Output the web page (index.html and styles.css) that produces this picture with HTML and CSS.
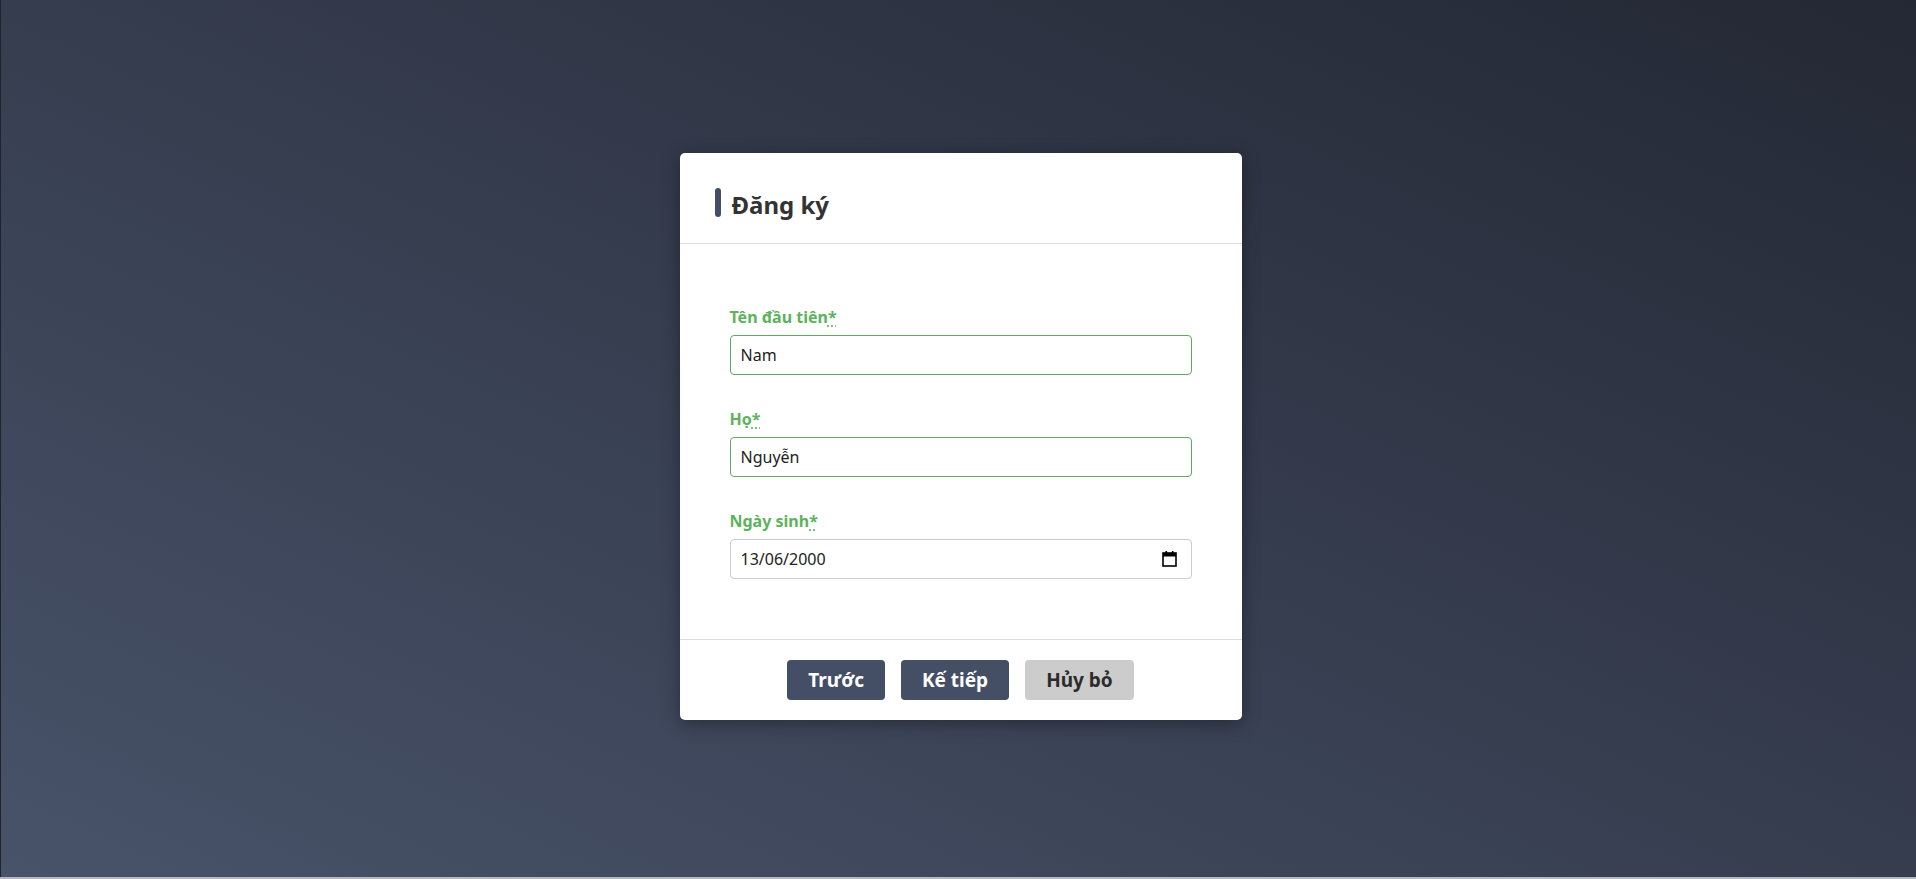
FILE: index.html
```html
<!DOCTYPE html>
<html lang="vi">
<head>
    <meta charset="utf-8">
    <title>Đăng ký</title>
    <link rel="stylesheet" href="styles.css">
</head>
<body>
    <div class="page">
        <div class="card">
            <div class="card-header">
                <span class="accent"></span>
                <h1>Đăng ký</h1>
            </div>

            <form class="card-body">
                <div class="field">
                    <label for="first-name" class="valid">Tên đầu tiên<abbr title="bắt buộc">*</abbr></label>
                    <input id="first-name" class="input input-valid" type="text" value="Nam">
                </div>
                <div class="field">
                    <label for="last-name" class="valid">Họ<abbr title="bắt buộc">*</abbr></label>
                    <input id="last-name" class="input input-valid" type="text" value="Nguyễn">
                </div>
                <div class="field">
                    <label for="birthday" class="valid">Ngày sinh<abbr title="bắt buộc">*</abbr></label>
                    <div class="date-wrap">
                        <input id="birthday" class="input" type="text" value="13/06/2000">
                        <svg class="date-icon" width="15" height="16" viewBox="0 0 15 16">
                            <rect x="1" y="2" width="13" height="13" fill="none" stroke="#000" stroke-width="1.6"/>
                            <rect x="1" y="2" width="13" height="3.5" fill="#000"/>
                            <rect x="3.5" y="0" width="1.6" height="3" fill="#000"/>
                            <rect x="9.9" y="0" width="1.6" height="3" fill="#000"/>
                        </svg>
                    </div>
                </div>
            </form>

            <div class="card-footer">
                <button class="button">Trước</button>
                <button class="button">Kế tiếp</button>
                <button class="button button-light">Hủy bỏ</button>
            </div>
        </div>
    </div>
</body>
</html>
```

FILE: styles.css
```css
body {
    margin: 0;
    background-color: #b4b8c1;
    font-family: "Noto Sans", "Open Sans", sans-serif;
}
.page {
    height: 877px;
    border-left: 1px solid #1f2330;
    background: linear-gradient(to top right, #485369 0%, #363d4f 50%, #242834 100%);
    display: flex;
    justify-content: center;
    align-items: flex-start;
    padding: 153px 0 0 4px;
    box-sizing: border-box;
}
.card {
    width: 562px;
    background-color: #fff;
    border-radius: 5px;
    box-shadow: 0 4px 18px rgba(0,0,0,0.35);
}
.card-header {
    display: flex;
    align-items: center;
    gap: 11px;
    padding: 35px 35px 26px;
    border-bottom: 1px solid #dcdcdc;
}
.accent {
    width: 6px;
    height: 29px;
    border-radius: 3px;
    background-color: #444e65;
}
h1 {
    margin: 0;
    font-size: 24px;
    line-height: 29px;
    font-weight: 700;
    color: #333;
    position: relative;
    top: 2px;
}
.card-body {
    padding: 61px 50px 60px;
    display: flex;
    flex-direction: column;
    gap: 32px;
}
.field {
    display: flex;
    flex-direction: column;
    gap: 6px;
}
label {
    font-size: 16px;
    line-height: 24px;
    font-weight: 700;
    color: #333;
}
label.valid {
    color: #5cb35c;
}
abbr {
    text-decoration: underline dotted;
    text-underline-offset: 3px;
    cursor: help;
}
.input {
    box-sizing: border-box;
    width: 100%;
    height: 40px;
    padding: 0 10px;
    border: 1px solid #ccc;
    border-radius: 4px;
    font-family: "Noto Sans", "Open Sans", sans-serif;
    font-size: 16px;
    color: #222;
    background-color: #fff;
}
.input-valid {
    border-color: #62a95f;
}
.date-wrap {
    position: relative;
}
.date-icon {
    position: absolute;
    right: 15px;
    top: 12px;
}
.card-footer {
    display: flex;
    justify-content: center;
    gap: 16px;
    padding: 20px 0;
    border-top: 1px solid #dcdcdc;
}
.button {
    height: 40px;
    padding: 0 21px;
    border: none;
    border-radius: 4px;
    background-color: #444e65;
    color: #fff;
    font-family: "Noto Sans", "Open Sans", sans-serif;
    font-size: 19px;
    font-weight: 700;
    cursor: pointer;
}
.button-light {
    background-color: #cccccc;
    color: #2b2b2b;
}
```
